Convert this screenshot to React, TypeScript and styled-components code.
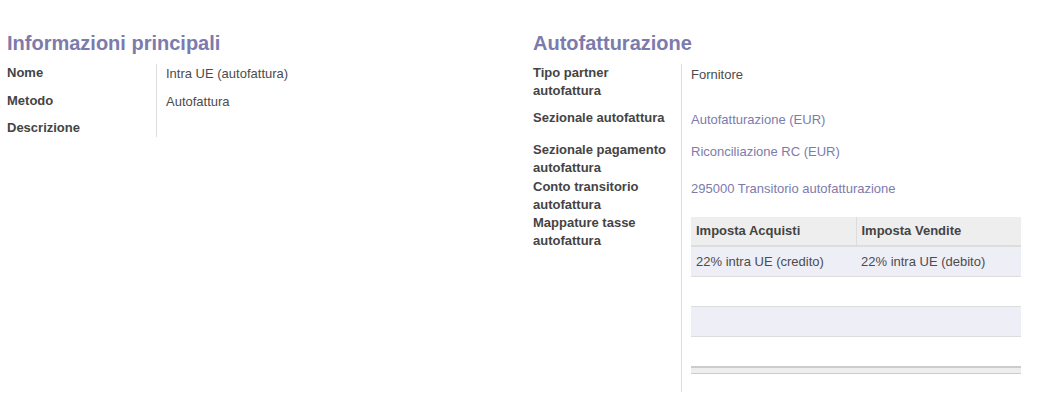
import React from "react";
import styled, { createGlobalStyle } from "styled-components";

const GlobalStyle = createGlobalStyle`
  html, body {
    margin: 0;
    padding: 0;
    background: #ffffff;
  }
  body {
    font-family: "Liberation Sans", Arial, sans-serif;
    font-size: 13px;
    color: #4c4c4c;
  }
`;

const Page = styled.div`
  display: grid;
  grid-template-columns: 488px 488px;
  column-gap: 38px;
  padding: 31px 0 0 7px;
  align-items: start;
`;

const Section = styled.section`
  display: flex;
  flex-direction: column;
`;

const Title = styled.h2`
  margin: 0 0 9px;
  font-size: 20px;
  line-height: 24px;
  font-weight: bold;
  color: #7c7bad;
`;

const FieldGrid = styled.div<{ $labelWidth: number }>`
  display: grid;
  grid-template-columns: ${(p) => p.$labelWidth}px 1fr;
`;

const Label = styled.div<{ $pb?: number }>`
  font-weight: bold;
  line-height: 18px;
  color: #444444;
  padding: 0 8px ${(p) => p.$pb ?? 0}px 0;
  border-right: 1px solid #dddddd;
`;

const Value = styled.div<{ $pt?: number; $pb?: number }>`
  line-height: 18px;
  padding: ${(p) => p.$pt ?? 1}px 0 ${(p) => p.$pb ?? 0}px 9px;
  min-width: 0;
`;

const Link = styled.a`
  color: #7c7bad;
  text-decoration: none;
`;

const Table = styled.table`
  width: 100%;
  border-collapse: collapse;
  table-layout: fixed;
`;

const Th = styled.th`
  text-align: left;
  font-weight: bold;
  color: #444444;
  background: #eeeeee;
  padding: 5px 5px 5px;
  line-height: 18px;
  border-bottom: 2px solid #dddddd;
  & + & {
    border-left: 1px solid #dddddd;
  }
`;

const BodyRow = styled.tr`
  &:nth-child(odd) {
    background: #eeeef7;
  }
`;

const Td = styled.td`
  padding: 6px 5px 5px;
  line-height: 18px;
  height: 18px;
  border-bottom: 1px solid #dddddd;
  white-space: nowrap;
`;

const FootCell = styled.td`
  padding: 0;
  height: 5px;
  background: #eeeeee;
  border-top: 2px solid #cccccc;
  border-bottom: 1px solid #cccccc;
`;

const taxes = [
  { buy: "22% intra UE (credito)", sell: "22% intra UE (debito)" },
  { buy: "", sell: "" },
  { buy: "", sell: "" },
  { buy: "", sell: "" },
];

export default function App() {
  return (
    <>
      <GlobalStyle />
      <Page>
        <Section>
          <Title>Informazioni principali</Title>
          <FieldGrid $labelWidth={150}>
            <Label>Nome</Label>
            <Value $pb={9}>Intra UE (autofattura)</Value>
            <Label>Metodo</Label>
            <Value $pb={8}>Autofattura</Value>
            <Label>Descrizione</Label>
            <Value $pt={0} />
          </FieldGrid>
        </Section>
        <Section>
          <Title>Autofatturazione</Title>
          <FieldGrid $labelWidth={149}>
            <Label>Tipo partner autofattura</Label>
            <Value $pt={2} $pb={25}>Fornitore</Value>
            <Label>Sezionale autofattura</Label>
            <Value $pt={2} $pb={12}>
              <Link href="#">Autofatturazione (EUR)</Link>
            </Value>
            <Label $pb={1}>Sezionale pagamento autofattura</Label>
            <Value $pt={2} $pb={12}>
              <Link href="#">Riconciliazione RC (EUR)</Link>
            </Value>
            <Label>Conto transitorio autofattura</Label>
            <Value $pt={2} $pb={12}>
              <Link href="#">295000 Transitorio autofatturazione</Link>
            </Value>
            <Label>Mappature tasse autofattura</Label>
            <Value $pt={3} $pb={18}>
              <Table>
                <thead>
                  <tr>
                    <Th>Imposta Acquisti</Th>
                    <Th>Imposta Vendite</Th>
                  </tr>
                </thead>
                <tbody>
                  {taxes.map((t, i) => (
                    <BodyRow key={i}>
                      <Td>{t.buy}</Td>
                      <Td>{t.sell}</Td>
                    </BodyRow>
                  ))}
                </tbody>
                <tfoot>
                  <tr>
                    <FootCell colSpan={2} />
                  </tr>
                </tfoot>
              </Table>
            </Value>
          </FieldGrid>
        </Section>
      </Page>
    </>
  );
}
